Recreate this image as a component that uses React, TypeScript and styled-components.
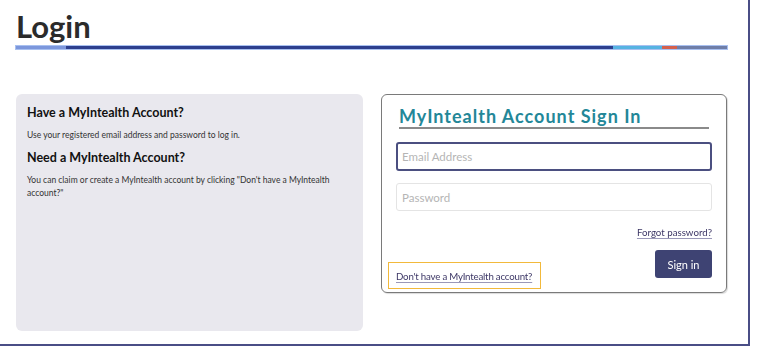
import styled, { createGlobalStyle } from "styled-components";

const GlobalStyle = createGlobalStyle`
  html, body {
    margin: 0;
    padding: 0;
    background: #fff;
    font-family: Lato, "Open Sans", sans-serif;
  }
`;

const Page = styled.div`
  box-sizing: border-box;
  width: 750px;
  height: 346px;
  border-right: 2px solid #4a4e86;
  border-bottom: 2px solid #4a4e86;
  padding: 0 21px 0 16px;
`;

const Title = styled.h1`
  margin: 0;
  padding-top: 6px;
  height: 40px;
  font-size: 31px;
  line-height: 40px;
  font-weight: 700;
  color: #2b2b2b;
`;

const Bar = styled.div`
  display: flex;
  height: 3px;
  outline: 1px solid #a8c0f0;
`;

const Segment = styled.div<{ $w: string; $c: string }>`
  width: ${(p) => p.$w};
  flex: ${(p) => (p.$w === "auto" ? 1 : "none")};
  background: ${(p) => p.$c};
`;

const Content = styled.div`
  display: flex;
  gap: 18px;
  margin-top: 45px;
`;

const InfoPanel = styled.div`
  box-sizing: border-box;
  width: 347px;
  height: 237px;
  background: #e9e8ee;
  border-radius: 6px;
  padding: 10px 11px;
  color: #222;
`;

const InfoHeading = styled.h3`
  margin: 0;
  font-size: 12.5px;
  font-weight: 700;
  line-height: 17px;
  color: #111;
  & + p {
    margin-top: 8px;
  }
`;

const InfoText = styled.p`
  margin: 0 0 7px;
  font-size: 8.5px;
  line-height: 13px;
  color: #333;
`;

const Card = styled.div`
  box-sizing: border-box;
  width: 346px;
  height: 199px;
  border: 1px solid #7a7a7a;
  border-radius: 6px;
  box-shadow: 1px 1px 1px rgba(0, 0, 0, 0.15);
  padding: 10px 14px 0;
  display: flex;
  flex-direction: column;
`;

const CardTitle = styled.h2`
  margin: 0 3px;
  font-size: 18px;
  font-weight: 700;
  letter-spacing: 1px;
  line-height: 22px;
  color: #238798;
  border-bottom: 2px solid #8a8a8a;
  padding-bottom: 0;
`;

const Input = styled.input<{ $focused?: boolean }>`
  box-sizing: border-box;
  width: 100%;
  height: ${(p) => (p.$focused ? 29 : 28)}px;
  border: ${(p) => (p.$focused ? "2px solid #4b4f80" : "1px solid #e4e4e4")};
  border-radius: 3px;
  padding: 0 ${(p) => (p.$focused ? 4 : 5)}px;
  font-family: inherit;
  font-size: 11.5px;
  outline: none;
  margin-top: ${(p) => (p.$focused ? 13 : 12)}px;
  caret-color: #333;
  &::placeholder {
    color: #b5b5b5;
  }
`;

const ForgotRow = styled.div`
  display: flex;
  justify-content: flex-end;
  margin-top: 15px;
`;

const TextLink = styled.a<{ $tight?: boolean }>`
  font-size: 9.7px;
  line-height: 13px;
  letter-spacing: ${(p) => (p.$tight ? "-0.2px" : "0")};
  color: #3d3766;
  text-decoration: underline;
  text-decoration-color: #9a98b8;
  text-underline-offset: 2px;
  cursor: pointer;
`;

const BottomRow = styled.div`
  display: flex;
  justify-content: space-between;
  align-items: flex-start;
  margin: 11px 0 0 -8px;
`;

const RegisterBox = styled.div`
  margin-top: 12px;
  border: 1px solid #f2b93b;
  padding: 7px 8px 5px 7px;
  display: flex;
`;

const SignInButton = styled.button`
  width: 57px;
  height: 28px;
  border: none;
  border-radius: 3px;
  background: #3e4373;
  color: #fff;
  font-family: inherit;
  font-size: 11px;
  cursor: pointer;
`;

export default function App() {
  return (
    <>
      <GlobalStyle />
      <Page>
        <Title>Login</Title>
        <Bar>
          <Segment $w="50px" $c="#7c97dc" />
          <Segment $w="547px" $c="#2d3f8e" />
          <Segment $w="49px" $c="#56b3e2" />
          <Segment $w="15px" $c="#d5604c" />
          <Segment $w="auto" $c="#6f7ea8" />
        </Bar>
        <Content>
          <InfoPanel>
            <InfoHeading>Have a MyIntealth Account?</InfoHeading>
            <InfoText>Use your registered email address and password to log in.</InfoText>
            <InfoHeading>Need a MyIntealth Account?</InfoHeading>
            <InfoText>
              You can claim or create a MyIntealth account by clicking "Don't have a MyIntealth
              account?"
            </InfoText>
          </InfoPanel>
          <Card>
            <CardTitle>MyIntealth Account Sign In</CardTitle>
            <Input $focused autoFocus placeholder="Email Address" />
            <Input placeholder="Password" type="password" />
            <ForgotRow>
              <TextLink>Forgot password?</TextLink>
            </ForgotRow>
            <BottomRow>
              <RegisterBox>
                <TextLink $tight>Don't have a MyIntealth account?</TextLink>
              </RegisterBox>
              <SignInButton>Sign in</SignInButton>
            </BottomRow>
          </Card>
        </Content>
      </Page>
    </>
  );
}
